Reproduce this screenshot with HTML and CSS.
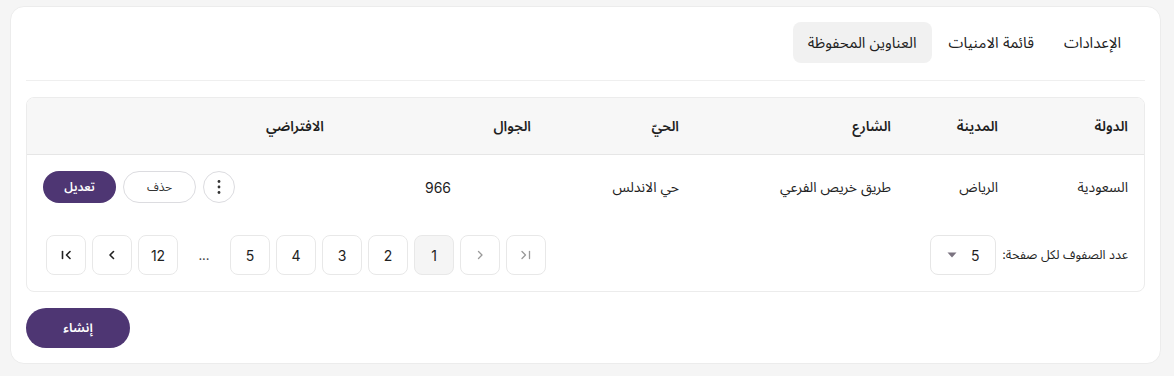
FILE: index.html
```html
<!DOCTYPE html>
<html lang="ar" dir="rtl">
<head>
<meta charset="utf-8">
<link rel="stylesheet" href="styles.css">
</head>
<body>
<div class="card">
  <nav class="tabs">
    <div class="tab">الإعدادات</div>
    <div class="tab">قائمة الامنيات</div>
    <div class="tab active">العناوين المحفوظة</div>
  </nav>
  <div class="divider"></div>
  <div class="table">
    <div class="thead grid">
      <div>الدولة</div>
      <div>المدينة</div>
      <div>الشارع</div>
      <div>الحيّ</div>
      <div>الجوال</div>
      <div>الافتراضي</div>
    </div>
    <div class="trow grid">
      <div>السعودية</div>
      <div>الرياض</div>
      <div>طريق خريص الفرعي</div>
      <div>حي الاندلس</div>
      <div class="phone"><span>966</span></div>
      <div class="actions">
        <button class="kebab" aria-label="more">
          <svg width="4" height="16" viewBox="0 0 4 16"><circle cx="2" cy="2.5" r="1.4"/><circle cx="2" cy="8" r="1.4"/><circle cx="2" cy="13.5" r="1.4"/></svg>
        </button>
        <button class="btn-outline">حذف</button>
        <button class="btn-primary sm">تعديل</button>
      </div>
    </div>
    <div class="pager">
      <div class="per-page">
        <span>عدد الصفوف لكل صفحة:</span>
        <div class="select">
          <span>5</span>
          <svg width="10" height="6" viewBox="0 0 10 6"><path d="M0.5 0.5h9L5 5.5z"/></svg>
        </div>
      </div>
      <div class="pages">
        <button class="pg dim"><svg width="12" height="12" viewBox="0 0 12 12"><path d="M2 2.5 5.5 6 2 9.5"/><path d="M9.5 2.5v7"/></svg></button>
        <button class="pg dim"><svg width="12" height="12" viewBox="0 0 12 12"><path d="M4.5 2.5 8 6 4.5 9.5"/></svg></button>
        <button class="pg current">1</button>
        <button class="pg">2</button>
        <button class="pg">3</button>
        <button class="pg">4</button>
        <button class="pg">5</button>
        <span class="ellipsis">...</span>
        <button class="pg">12</button>
        <button class="pg"><svg width="12" height="12" viewBox="0 0 12 12"><path d="M7.5 2.5 4 6 7.5 9.5"/></svg></button>
        <button class="pg"><svg width="12" height="12" viewBox="0 0 12 12"><path d="M10 2.5 6.5 6 10 9.5"/><path d="M2.5 2.5v7"/></svg></button>
      </div>
    </div>
  </div>
  <div class="footer">
    <button class="btn-primary lg">إنشاء</button>
  </div>
</div>
</body>
</html>
```
FILE: styles.css
```css
* { box-sizing: border-box; }
html, body { background: #f5f5f5; }
body {
  margin: 6px 13px 0 10px;
  font-family: "Inter", "Noto Sans Arabic", "Noto Kufi Arabic", "Noto Naskh Arabic", "DejaVu Sans", sans-serif;
  color: #1f1f1f;
  font-size: 14px;
}
button { font-family: inherit; cursor: pointer; }
.card {
  background: #fff;
  border: 1px solid #ececec;
  border-radius: 14px;
  padding: 15px 15px 15px;
  height: 358px;
}
.tabs {
  display: flex;
  gap: 0;
  padding-right: 9px;
  height: 41px;
}
.tab {
  display: flex;
  align-items: center;
  padding: 0 15px;
  border-radius: 8px;
  font-size: 15px;
  color: #222;
}
.tab:first-child { padding-left: 13px; }
.tab:nth-child(2) { padding: 0 17px 0 17px; }
.tab.active { background: #f1f1f1; }
.divider {
  height: 1px;
  background: #efefef;
  margin: 17px 0 16px;
}
.table {
  border: 1px solid #ececec;
  border-radius: 8px;
  overflow: hidden;
}
.grid {
  display: grid;
  grid-template-columns: 130px 107px 212px 148px 207px 1fr;
  padding: 0 16px;
  align-items: center;
}
.thead {
  background: #f7f7f7;
  height: 57px;
  border-bottom: 1px solid #e6e6e6;
  font-weight: 600;
  font-size: 14px;
}
.trow {
  padding-top: 16px;
  padding-bottom: 16px;
  font-size: 14px;
}
.phone { padding-right: 80px; }
.phone span { direction: ltr; }
.actions {
  display: flex;
  justify-content: flex-end;
  gap: 7px;
}
.kebab {
  width: 32px; height: 32px;
  border: 1px solid #dcdce0;
  border-radius: 50%;
  background: #fff;
  display: flex; align-items: center; justify-content: center;
  padding: 0;
  fill: #333;
}
.btn-outline {
  width: 73px; height: 32px;
  border: 1px solid #dcdce0;
  border-radius: 16px;
  background: #fff;
  font-size: 12px;
  color: #333;
}
.btn-primary {
  background: #4e3673;
  color: #fff;
  border: 0;
  font-weight: 600;
}
.btn-primary.sm {
  width: 73px; height: 32px;
  border-radius: 16px;
  font-size: 12px;
}
.btn-primary.lg {
  width: 104px; height: 40px;
  border-radius: 20px;
  font-size: 13px;
}
.pager {
  display: flex;
  justify-content: space-between;
  align-items: center;
  padding: 16px 16px 16px 19px;
}
.per-page {
  display: flex;
  align-items: center;
  gap: 6px;
  font-size: 12.5px;
}
.select {
  width: 66px; height: 40px;
  border: 1px solid #e6e6e6;
  border-radius: 8px;
  display: flex;
  align-items: center;
  justify-content: center;
  gap: 14px;
  font-size: 14px;
  fill: #7a7380;
}
.pages {
  display: flex;
  gap: 6px;
  align-items: center;
}
.pg {
  width: 40px; height: 40px;
  border: 1px solid #e8e8e8;
  border-radius: 8px;
  background: #fff;
  font-size: 14px;
  color: #222;
  padding: 0;
  display: flex; align-items: center; justify-content: center;
}
.pg svg { fill: none; stroke: #222; stroke-width: 1.6; stroke-linecap: round; stroke-linejoin: round; }
.pg.dim svg { stroke: #9a9a9a; stroke-width: 1.3; }
.pg.current { background: #f5f5f5; }
.ellipsis {
  width: 40px;
  text-align: center;
  font-size: 13px;
  color: #444;
}
.footer {
  padding-top: 16px;
  display: flex;
  justify-content: flex-end;
}
```
